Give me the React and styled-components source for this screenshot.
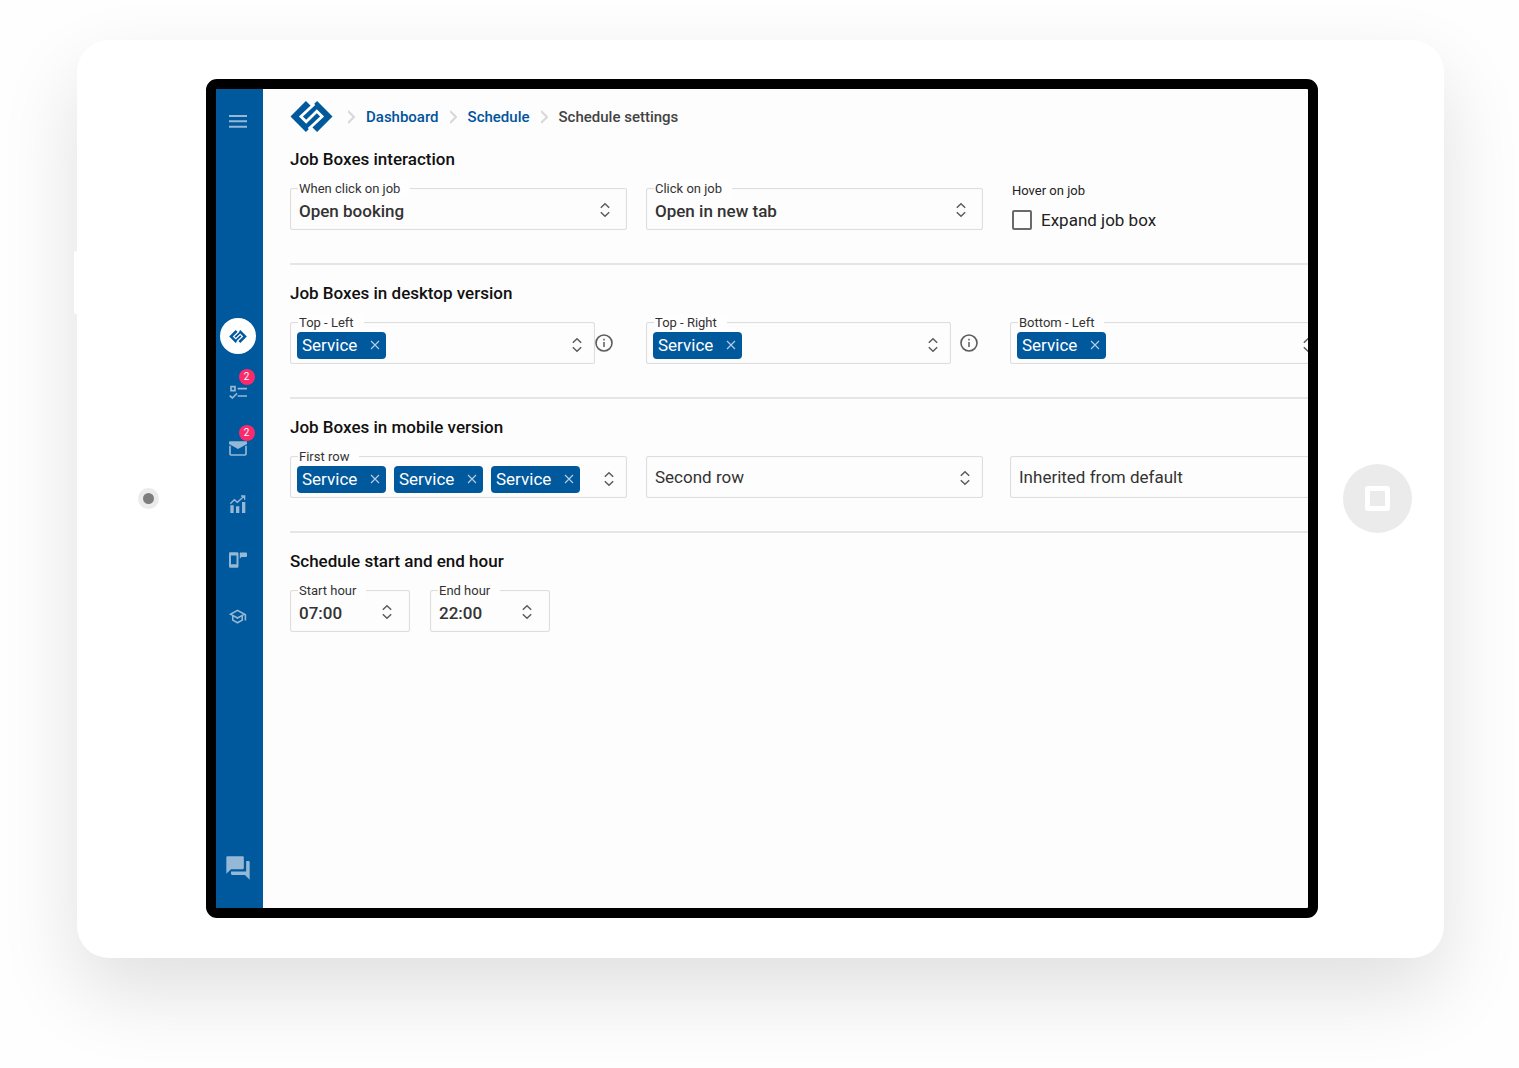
import React, { useState } from "react";
import styled, { createGlobalStyle } from "styled-components";
import { MdForum, MdOutlineSchool } from "react-icons/md";

const GlobalStyle = createGlobalStyle`
  * {
    box-sizing: border-box;
  }

  body {
    margin: 0;
    background: #fefefe;
    color: #1c1c1c;
    font-family: Roboto, "Liberation Sans", sans-serif;
  }

  button, select, input {
    font-family: inherit;
  }
`;

const Page = styled.div`
  padding: 40px 75px 110px 77px;
  overflow: hidden;
`;

const Tablet = styled.div`
  position: relative;
  display: flex;
  align-items: center;
  padding: 39px 0 40px;
  border-radius: 32px;
  background: #fff;
  box-shadow: 0 34px 80px rgba(0, 0, 0, 0.12);
`;

const SideKey = styled.span`
  position: absolute;
  top: 211px;
  left: -3px;
  width: 3px;
  height: 63px;
  border-radius: 2px 0 0 2px;
  background: #fff;
`;

const Bezel = styled.div`
  display: flex;
  flex: none;
  justify-content: center;
  width: ${(props) => props.$width};
`;

const Camera = styled.span`
  width: 21px;
  height: 21px;
  border: 5px solid #ebebeb;
  border-radius: 50%;
  background: #7d7d7d;
  margin-right: -14px;
`;

const HomeButton = styled.button`
  display: grid;
  place-items: center;
  width: 69px;
  height: 69px;
  margin-right: 8px;
  padding: 0;
  border: none;
  border-radius: 50%;
  background: #ebebeb;

  &::before {
    content: "";
    width: 15px;
    height: 15px;
    border: 5px solid #fff;
    border-radius: 3px;
  }
`;

const Screen = styled.div`
  display: flex;
  flex: 1;
  min-width: 0;
  aspect-ratio: 1112 / 839;
  border: 10px solid #000;
  border-radius: 11px;
  background: #fdfdfd;
`;

const Sidebar = styled.nav`
  display: flex;
  flex: none;
  flex-direction: column;
  align-items: center;
  width: 47px;
  padding: 22px 4px 26px 0;
  background: #00589d;
  color: #94b8d6;
`;

const IconButton = styled.button`
  position: relative;
  display: grid;
  flex: none;
  place-items: center;
  width: 40px;
  height: ${(props) => props.$height || "56px"};
  padding: 0;
  border: none;
  background: none;
  color: inherit;
  cursor: pointer;

  svg {
    display: block;
  }
`;

const HomeLink = styled.a`
  display: grid;
  flex: none;
  place-items: center;
  width: 36px;
  height: 36px;
  margin: 187px 0 10px;
  border-radius: 50%;
  background: #fff;
`;

const Badge = styled.span`
  position: absolute;
  top: 5px;
  right: 3px;
  width: 16px;
  height: 16px;
  border-radius: 50%;
  background: #fb2b6b;
  color: #fff;
  font-size: 10px;
  line-height: 16px;
  text-align: center;
`;

const ChatSlot = styled.div`
  margin-top: auto;
`;

const Main = styled.main`
  flex: 1;
  min-width: 0;
  padding: 12px 0 24px 27px;
  overflow: hidden;
`;

const Breadcrumbs = styled.nav`
  display: flex;
  align-items: center;
  gap: 11px;
  height: 31px;
  color: #434343;
  font-size: 15px;
  font-weight: 500;
  line-height: 20px;

  svg {
    display: block;
    flex: none;
  }
`;

const LogoLink = styled.a`
  margin-right: 4px;
`;

const Crumb = styled.a`
  color: #00549c;
  text-decoration: none;
`;

const Section = styled.section`
  padding: 17px 0 33px;

  & + & {
    border-top: 2px solid #e6e6e6;
    padding: 18px 0 33px;
  }
`;

const SectionTitle = styled.h2`
  margin: 0 0 19px;
  color: #111;
  font-size: 17px;
  font-weight: 500;
  line-height: 20px;
`;

const Columns = styled.div`
  display: grid;
  grid-template-columns: 356px 364px 337px;
`;

const Inline = styled.div`
  display: flex;
  align-items: center;
  gap: ${(props) => props.$gap || "0"};
`;

const Field = styled.div`
  position: relative;
  display: flex;
  flex: none;
  align-items: center;
  width: ${(props) => props.$width || "337px"};
  height: 42px;
  border: 1px solid #dedede;
  border-radius: 2px;
  box-shadow: inset 0 0 1px #e0e0e0;
`;

const FieldLabel = styled.label`
  position: absolute;
  top: -9px;
  left: 7px;
  padding: 0 10px 0 1px;
  background: #fefefe;
  color: #333;
  font-size: 13px;
  line-height: 18px;
`;

const Select = styled.select`
  width: 100%;
  height: 100%;
  padding: ${(props) => (props.$plain ? "0 36px 0 8px" : "4px 36px 0 8px")};
  border: none;
  outline: none;
  appearance: none;
  background: none;
  color: #333;
  font-size: 17px;
  font-weight: ${(props) => (props.$plain ? 400 : 500)};
`;

const Arrows = styled.span`
  position: absolute;
  top: 13px;
  right: ${(props) => props.$right || "12px"};
  pointer-events: none;

  svg {
    display: block;
  }
`;

const Chips = styled.div`
  display: flex;
  flex: 1;
  gap: 8px;
  padding: 4px 0 0 6px;
`;

const Chip = styled.span`
  display: flex;
  align-items: center;
  justify-content: space-between;
  width: 89px;
  height: 27px;
  padding: 0 6px 0 5px;
  border-radius: 4px;
  background: #00589d;
  color: #fff;
  font-size: 17px;
  line-height: 20px;
`;

const RemoveButton = styled.button`
  padding: 0;
  border: none;
  background: none;
  cursor: pointer;

  svg {
    display: block;
  }
`;

const OpenButton = styled(RemoveButton)`
  margin: 4px 12px 0 0;
`;

const InfoButton = styled(RemoveButton)`
  flex: none;
`;

const HoverOption = styled.div`
  padding-left: 2px;
`;

const Caption = styled.div`
  color: #222;
  font-size: 13px;
  line-height: 18px;
  margin: -6px 0 10px;
`;

const CheckLabel = styled.label`
  display: flex;
  align-items: center;
  gap: 9px;
  color: #222;
  font-size: 17px;
  line-height: 20px;
`;

const Checkbox = styled.input`
  width: 20px;
  height: 20px;
  margin: 0;
  border: 2px solid #6a6a6a;
  border-radius: 2px;
  appearance: none;

  &:checked {
    background: #00589d;
  }
`;

const Logo = ({ width = 43, height = 31 }) => (
  <svg width={width} height={height} viewBox="0 0 42 31" aria-hidden="true">
    <path
      d="M0 15.5 15.4 0 21 5.6 26.6 0 42 15.5 26.6 31 21 25.4 15.4 31Z"
      fill="#00589d"
    />
    <path
      d="M23.8 2.9 10.4 15.5 15.7 20.8 26.3 10.2 31.6 15.5 18.2 28.1"
      fill="none"
      stroke="#fff"
      strokeWidth="2.8"
    />
  </svg>
);

const MenuIcon = () => (
  <svg width="18" height="13" viewBox="0 0 18 13" fill="currentColor">
    <path d="M0 0h18v2H0zM0 5.3h18v2H0zM0 10.7h18v2H0z" />
  </svg>
);

const TasksIcon = () => (
  <svg width="18" height="14" viewBox="0 0 54 42" fill="none" stroke="currentColor" strokeWidth="5">
    <path d="M6 5h12v12H6zM26 11h28M26 33h28M2 32l8 7 14-14" />
  </svg>
);

const MailIcon = () => (
  <svg width="18" height="15" viewBox="0 0 54 45">
    <path d="M3 14v25q0 3 3 3h42q3 0 3-3V14" fill="none" stroke="currentColor" strokeWidth="5" />
    <path d="M3 1h48q3 0 3 3v5L27 24 0 9V4q0-3 3-3z" fill="currentColor" />
  </svg>
);

const ChartIcon = () => (
  <svg width="16" height="18" viewBox="0 0 48 54">
    <path d="M1 31h10v23H1zM18 34h10v20H18zM36 21h10v33H36z" fill="currentColor" />
    <path d="M1 26 13 14l9 8L43 3M33 3h11v11" fill="none" stroke="currentColor" strokeWidth="4" />
  </svg>
);

const PhoneIcon = () => (
  <svg width="18" height="16" viewBox="0 0 55 48" fill="currentColor">
    <path
      fillRule="evenodd"
      d="M3 0h22q4 0 4 4v40q0 4-4 4H4q-4 0-4-4V4q0-4 3-4zM6 10v27h17V10z"
    />
    <path d="M35 1h17q3 0 3 3v8q0 3-3 3H38l-5 5V4q0-3 2-3z" />
  </svg>
);

const Separator = () => (
  <svg width="7" height="14" viewBox="0 0 7 14" fill="none" stroke="#d8d8d8" strokeWidth="2">
    <path d="m0 1 6 6-6 6" />
  </svg>
);

const UpDown = () => (
  <svg width="10" height="16" viewBox="0 0 10 16" fill="none" stroke="#5c5c5c" strokeWidth="1.5">
    <path d="m.8 5.8 4.2-4 4.2 4M.8 10.2l4.2 4 4.2-4" />
  </svg>
);

const Cross = () => (
  <svg width="10" height="10" viewBox="0 0 10 10" stroke="#b3cce1" strokeWidth="1.2">
    <path d="m1 1 8 8M9 1 1 9" />
  </svg>
);

const InfoIcon = () => (
  <svg width="18" height="18" viewBox="0 0 18 18" fill="none" stroke="#5c5c5c">
    <circle cx="9" cy="9" r="8" strokeWidth="1.6" />
    <path d="M9 8v5M9 4.8v1.6" strokeWidth="1.5" />
  </svg>
);

const SelectField = ({ id, label, value, width, right }) => (
  <Field $width={width}>
    <Select id={id} $plain={!label} aria-label={label ? undefined : value}>
      <option>{value}</option>
    </Select>
    {label && <FieldLabel htmlFor={id}>{label}</FieldLabel>}
    <Arrows $right={right}>
      <UpDown />
    </Arrows>
  </Field>
);

const ChipField = ({ id, label, count = 1, width }) => {
  const [chips, setChips] = useState(Array(count).fill("Service"));

  const remove = (index) => {
    setChips(chips.filter((_, i) => i !== index));
  };

  return (
    <Field $width={width}>
      <FieldLabel htmlFor={id}>{label}</FieldLabel>
      <Chips>
        {chips.map((chip, index) => (
          <Chip key={index}>
            {chip}
            <RemoveButton aria-label={`Remove ${chip}`} onClick={() => remove(index)}>
              <Cross />
            </RemoveButton>
          </Chip>
        ))}
      </Chips>
      <OpenButton id={id}>
        <UpDown />
      </OpenButton>
    </Field>
  );
};

const InfoField = ({ gap, ...field }) => (
  <Inline $gap={gap}>
    <ChipField {...field} />
    <InfoButton aria-label={`About ${field.label}`}>
      <InfoIcon />
    </InfoButton>
  </Inline>
);

const App = () => {
  const [expand, setExpand] = useState(false);

  return (
    <Page>
      <GlobalStyle />
      <Tablet>
        <SideKey />
        <Bezel $width="129px">
          <Camera />
        </Bezel>
        <Screen>
          <Sidebar>
            <IconButton $height="20px" aria-label="Menu">
              <MenuIcon />
            </IconButton>
            <HomeLink href="#home" aria-label="Home">
              <Logo width={18} height={13} />
            </HomeLink>
            <IconButton aria-label="Tasks">
              <TasksIcon />
              <Badge>2</Badge>
            </IconButton>
            <IconButton aria-label="Mail">
              <MailIcon />
              <Badge>2</Badge>
            </IconButton>
            <IconButton aria-label="Reports">
              <ChartIcon />
            </IconButton>
            <IconButton aria-label="Messages">
              <PhoneIcon />
            </IconButton>
            <IconButton aria-label="Academy">
              <MdOutlineSchool size={19} />
            </IconButton>
            <ChatSlot>
              <IconButton $height="28px" aria-label="Chat">
                <MdForum size={28} />
              </IconButton>
            </ChatSlot>
          </Sidebar>
          <Main>
            <Breadcrumbs aria-label="Breadcrumb">
              <LogoLink href="#home" aria-label="Home">
                <Logo />
              </LogoLink>
              <Separator />
              <Crumb href="#dashboard">Dashboard</Crumb>
              <Separator />
              <Crumb href="#schedule">Schedule</Crumb>
              <Separator />
              <span>Schedule settings</span>
            </Breadcrumbs>
            <Section>
              <SectionTitle>Job Boxes interaction</SectionTitle>
              <Columns>
                <SelectField id="when-click" label="When click on job" value="Open booking" right="16px" />
                <SelectField id="click" label="Click on job" value="Open in new tab" right="16px" />
                <HoverOption>
                  <Caption>Hover on job</Caption>
                  <CheckLabel>
                    <Checkbox
                      type="checkbox"
                      checked={expand}
                      onChange={(e) => setExpand(e.target.checked)}
                    />
                    Expand job box
                  </CheckLabel>
                </HoverOption>
              </Columns>
            </Section>
            <Section>
              <SectionTitle>Job Boxes in desktop version</SectionTitle>
              <Columns>
                <InfoField id="top-left" label="Top - Left" width="305px" />
                <InfoField id="top-right" label="Top - Right" width="305px" gap="9px" />
                <InfoField id="bottom-left" label="Bottom - Left" width="316px" />
              </Columns>
            </Section>
            <Section>
              <SectionTitle>Job Boxes in mobile version</SectionTitle>
              <Columns>
                <ChipField id="first-row" label="First row" count={3} />
                <SelectField id="second-row" value="Second row" />
                <SelectField id="third-row" value="Inherited from default" />
              </Columns>
            </Section>
            <Section>
              <SectionTitle>Schedule start and end hour</SectionTitle>
              <Inline $gap="20px">
                <SelectField id="start" label="Start hour" value="07:00" width="120px" right="17px" />
                <SelectField id="end" label="End hour" value="22:00" width="120px" right="17px" />
              </Inline>
            </Section>
          </Main>
        </Screen>
        <Bezel $width="126px">
          <HomeButton aria-label="Home button" />
        </Bezel>
      </Tablet>
    </Page>
  );
};

export default App;
